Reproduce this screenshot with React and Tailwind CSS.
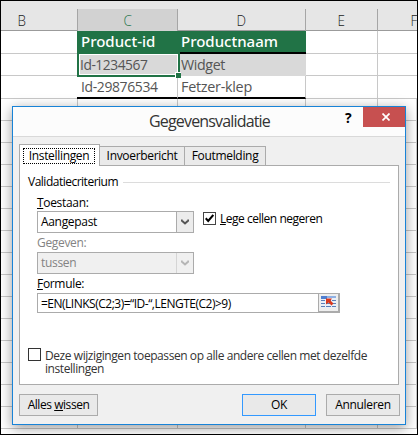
const emptyRows = Array.from({ length: 15 }, (_, i) => i)

function HeaderCell({ children, className = '' }) {
    return (
        <div className={`flex items-center justify-center border-r border-[#a6a6a6] text-[15px] text-[#222] ${className}`}>
            <span className="scale-x-90 font-light">{children}</span>
        </div>
    )
}

function Sheet() {
    return (
        <div className="h-full overflow-hidden bg-white font-['Open_Sans','Noto_Sans',sans-serif]">
            <header className="flex h-[30px] items-end border-b border-[#9b9b9b] bg-[#e6e6e6]">
                <div className="grid h-[21px] w-full grid-cols-[77px_100px_128px_72px_72px]">
                    <HeaderCell className="pr-[34px]">B</HeaderCell>
                    <HeaderCell className="bg-[#d2d2d2] text-[#217346]">C</HeaderCell>
                    <HeaderCell>D</HeaderCell>
                    <HeaderCell>E</HeaderCell>
                    <HeaderCell>F</HeaderCell>
                </div>
            </header>
            <div className="flex h-[23px] text-[15px] leading-[21px] text-white">
                <div className="w-[76px] border-b border-[#c8c8c8]" />
                <div className="w-[101px] bg-[#217346] pl-[4px] font-['Noto_Sans',sans-serif] font-medium">Product-id</div>
                <div className="w-[128px] border-b-2 border-black bg-[#217346] pl-[3px] font-['Noto_Sans',sans-serif] font-medium">Productnaam</div>
                <div className="w-[72px] border-r border-b border-[#c8c8c8]" />
                <div className="grow border-b border-[#c8c8c8]" />
            </div>
            <div className="flex h-[22px] text-[15px] leading-[21px] text-[#555]">
                <div className="w-[76px] border-b border-[#c8c8c8]" />
                <div className="relative w-[101px] bg-[#d9d9d9] pl-[3px]">
                    <div className="absolute -top-[2px] -right-[2px] -bottom-[1px] left-0 border-2 border-[#217346]">
                        <div className="h-full border border-white" />
                        <div className="absolute -right-[3px] -bottom-[3px] size-[6px] border-t border-l border-white bg-[#217346]" />
                    </div>
                    <span className="relative inline-block origin-left scale-x-92 tracking-[-0.5px]">Id-1234567</span>
                </div>
                <div className="w-[128px] bg-[#d9d9d9] pl-[3px]">
                    <span className="inline-block origin-left scale-x-95 tracking-[-0.4px]">Widget</span>
                </div>
                <div className="w-[72px] border-r border-b border-[#c8c8c8]" />
                <div className="grow border-b border-[#c8c8c8]" />
            </div>
            <div className="flex h-[23px] text-[15px] leading-[21px] tracking-[-0.4px] text-[#555]">
                <div className="w-[76px] border-b border-[#c8c8c8]" />
                <div className="w-[101px] border-r border-b-2 border-r-[#c8c8c8] border-b-black pl-[4px]">
                    <span className="inline-block origin-left scale-x-93">Id-29876534</span>
                </div>
                <div className="w-[128px] border-r border-b-2 border-r-[#c8c8c8] border-b-black pl-[3px]">
                    <span className="inline-block origin-left scale-x-96 tracking-[-0.3px]">Fetzer-klep</span>
                </div>
                <div className="w-[72px] border-r border-b border-[#c8c8c8]" />
                <div className="grow border-b border-[#c8c8c8]" />
            </div>
            {emptyRows.map((row) => (
                <div key={row} className="flex h-[22px] *:border-r *:border-b *:border-[#c8c8c8]">
                    <div className="w-[77px]" />
                    <div className="w-[100px]" />
                    <div className="w-[128px]" />
                    <div className="w-[72px]" />
                    <div className="grow" />
                </div>
            ))}
        </div>
    )
}

function ComboBox({ label, value, disabled }) {
    return (
        <div className={`flex h-[22px] w-[157px] border border-[#ababab] ${disabled ? 'bg-[#f0f0f0] text-[#838383]' : 'bg-white'}`}>
            <span aria-label={label} className="grow pl-[3px] leading-[20px]">{value}</span>
            <div className={`flex w-[17px] items-center justify-center border-l ${disabled ? 'border-[#d5d5d5] text-[#b5b5b5]' : 'border-[#ababab] bg-[#ececec] text-[#555]'}`}>
                <svg width="8" height="6" viewBox="0 0 8 6" fill="none" stroke="currentColor" strokeWidth="2">
                    <path d="M.7.5v1L4 4.500 7.300 1.500v-1" />
                </svg>
            </div>
        </div>
    )
}

function RangeIcon() {
    return (
        <svg width="16" height="13" viewBox="0 0 16 13" shapeRendering="crispEdges">
            <path fill="#e9eff8" d="M0 0h15v12H0z" />
            <path fill="#4f7ed0" d="M0 0h6v3H0z" />
            <path fill="#8fb0e3" d="M6 0h9v2H6z" />
            <path stroke="#5b7fb8" d="M0 4.500h4m1 0h5m1 0h4M0 7.500h4m1 0h5m1 0h4M0 10.500h4m1 0h5m1 0h4" />
            <path fill="#d9381e" shapeRendering="auto" d="M5 2.500h6L9.500 4.500l3 3-2 2-3-3L5 8.500z" />
        </svg>
    )
}

function Dialog() {
    return (
        <div className="absolute top-[105px] left-[11px] flex h-[319px] w-[394px] flex-col border border-[#1883d7] bg-[#f0f0f0] font-['Open_Sans','Noto_Sans',sans-serif] text-[12px] tracking-[-0.32px] whitespace-nowrap text-black shadow-[0_3px_12px_rgba(0,0,0,0.4)]">
            <header className="flex h-[30px] shrink-0 border-b border-[#d9d9d9] bg-[#fcfcfc]">
                <h1 className="grow pl-[136px] text-[16px] leading-[29px] tracking-[-0.83px] text-[#333]">Gegevensvalidatie</h1>
                <span className="w-[18px] pt-[1px] text-[14px] leading-[20px] font-bold">?</span>
                <button className="flex h-[20px] w-[42px] items-center justify-center bg-[#c75050] pl-[4px]">
                    <svg width="8" height="8" viewBox="0 0 8 8" stroke="#fff" strokeWidth="1.7">
                        <path d="M.5.5l7 7M7.500.5l-7 7" />
                    </svg>
                </button>
            </header>
            <div className="flex h-[28px] shrink-0 items-end pl-[6px]">
                <div className="relative z-10 -mb-px h-[22px] w-[81px] border border-b-0 border-[#ababab] bg-white p-[3px]">
                    <div className="flex h-[16px] w-[72px] items-center justify-center border border-dotted border-black">Instellingen</div>
                </div>
                <div className="flex h-[19px] w-[85px] items-center justify-center border-t border-r border-[#ababab] bg-[#eaeaea]">Invoerbericht</div>
                <div className="flex h-[19px] w-[81px] items-center justify-center border-t border-r border-[#ababab] bg-[#eaeaea]">Foutmelding</div>
            </div>
            <main className="ml-[6px] h-[220px] w-[380px] shrink-0 border border-[#ababab] bg-white px-[8px]">
                <div className="flex h-[29px] items-center pt-[3px]">
                    <span className="w-[95px] tracking-[-0.5px]">Validatiecriterium</span>
                    <span className="h-px grow bg-[#dcdcdc]" />
                </div>
                <div className="pl-[9px]">
                    <p className="h-[16px] leading-[16px]"><u>T</u>oestaan:</p>
                    <div className="flex">
                        <ComboBox label="Toestaan" value="Aangepast" />
                        <label className="ml-[9px] flex h-[15px] items-center gap-[4px]">
                            <span className="flex size-[13px] items-center justify-center border border-[#444]">
                                <svg width="9" height="9" viewBox="0 0 9 9" fill="none" stroke="#000" strokeWidth="2">
                                    <path d="M.7 4.300 3.200 7 8.300 1" />
                                </svg>
                            </span>
                            <span className="tracking-[-0.48px]"><u>L</u>ege cellen negeren</span>
                        </label>
                    </div>
                    <p className="h-[19px] leading-[19px] text-[#838383]">Gegeven:</p>
                    <ComboBox label="Gegeven" value="tussen" disabled />
                    <p className="h-[19px] leading-[19px]"><u>F</u>ormule:</p>
                    <div className="flex h-[20px] w-[303px] border border-[#ababab]">
                        <span className="grow pl-[3px] leading-[20px] tracking-[-0.5px]">=EN(LINKS(C2;3)=“ID-“,LENGTE(C2)&gt;9)</span>
                        <span className="flex w-[21px] items-center justify-center border-r border-b border-l border-[#ababab] bg-[#eee]">
                            <RangeIcon />
                        </span>
                    </div>
                </div>
                <label className="flex gap-[4px] pt-[35px] text-[#333]">
                    <span className="size-[13px] shrink-0 border border-[#333]" />
                    <span className="pt-[1px] leading-[13px] tracking-[-0.43px]">Deze wijzigingen toepassen op alle andere cellen met dezelfde<br />instellingen</span>
                </label>
            </main>
            <footer className="flex h-[31px] items-end pl-[6px] *:h-[22px] *:border *:bg-[#e9e9e9]">
                <button className="w-[79px] border-[#ababab] tracking-[-0.45px]">Alles <u>w</u>issen</button>
                <button className="ml-[144px] w-[74px] border-[#3399ff]">OK</button>
                <button className="ml-[10px] w-[74px] border-[#ababab]">Annuleren</button>
            </footer>
        </div>
    )
}

export default function App() {
    return (
        <div className="relative h-[435px] w-[418px] overflow-hidden border border-black">
            <Sheet />
            <Dialog />
        </div>
    )
}
